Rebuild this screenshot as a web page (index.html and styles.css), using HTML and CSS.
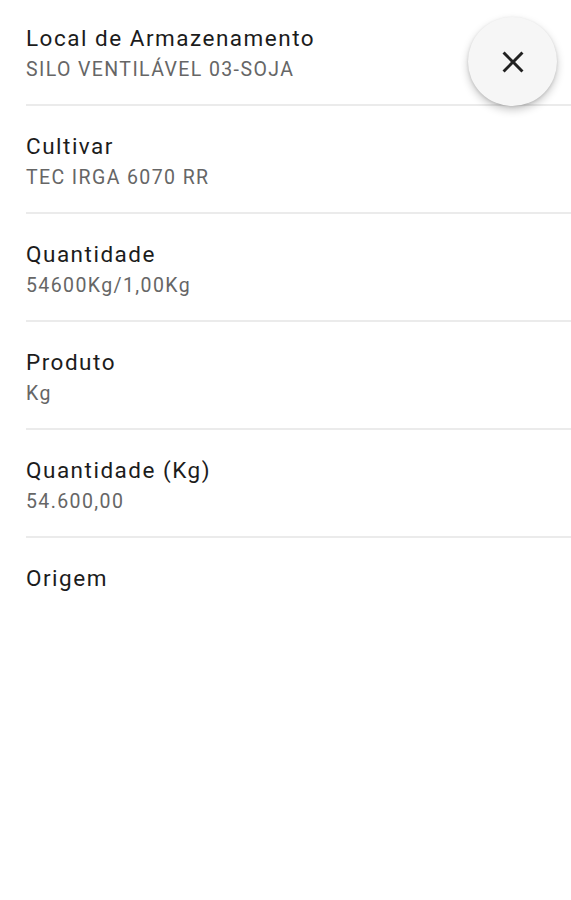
FILE: index.html
```html
<!DOCTYPE html>
<html lang="pt-BR">
<head>
    <meta charset="UTF-8">
    <meta name="viewport" content="width=device-width, initial-scale=1.0">
    <title>Detalhes do Lote</title>
    <link rel="stylesheet" href="styles.css">
</head>
<body>
    <div class="sheet">
        <button class="close-btn" aria-label="Fechar">
            <svg width="24" height="24" viewBox="0 0 24 24">
                <path d="M19 6.41L17.59 5 12 10.59 6.41 5 5 6.41 10.59 12 5 17.59 6.41 19 12 13.41 17.59 19 19 17.59 13.41 12z" fill="#212121"/>
            </svg>
        </button>
        <ul class="details">
            <li class="item">
                <div class="label">Local de Armazenamento</div>
                <div class="value">SILO VENTILÁVEL 03-SOJA</div>
            </li>
            <li class="item">
                <div class="label">Cultivar</div>
                <div class="value">TEC IRGA 6070 RR</div>
            </li>
            <li class="item">
                <div class="label">Quantidade</div>
                <div class="value">54600Kg/1,00Kg</div>
            </li>
            <li class="item">
                <div class="label">Produto</div>
                <div class="value">Kg</div>
            </li>
            <li class="item">
                <div class="label">Quantidade (Kg)</div>
                <div class="value">54.600,00</div>
            </li>
            <li class="item last">
                <div class="label">Origem</div>
            </li>
        </ul>
    </div>
</body>
</html>
```

FILE: styles.css
```css
body {
    font-family: Roboto, "Noto Sans", Arial, sans-serif;
    background-color: #ffffff;
    color: #212121;
    margin: 0;
}
.sheet {
    position: relative;
    min-height: 900px;
}
.details {
    list-style: none;
    margin: 0;
    padding: 0 0 0 26px;
}
.item {
    height: 60px;
    padding: 26px 0 20px 0;
    border-bottom: 2px solid #ebebeb;
}
.item:first-child {
    padding-top: 24px;
}
.item.last {
    border-bottom: none;
}
.label {
    font-size: 22.5px;
    line-height: 28px;
    letter-spacing: 1.5px;
    color: #1c1c1c;
}
.value {
    margin-top: 4px;
    font-size: 19.5px;
    line-height: 28px;
    letter-spacing: 1.4px;
    color: #666666;
}
.close-btn {
    position: absolute;
    top: 17px;
    right: 14px;
    width: 89px;
    height: 89px;
    border-radius: 50%;
    border: none;
    background-color: #f6f6f6;
    box-shadow: 0 4px 8px rgba(0,0,0,0.22), 0 1px 3px rgba(0,0,0,0.12);
    display: flex;
    align-items: center;
    justify-content: center;
    padding: 0;
}
.close-btn svg {
    width: 36px;
    height: 36px;
}
```
